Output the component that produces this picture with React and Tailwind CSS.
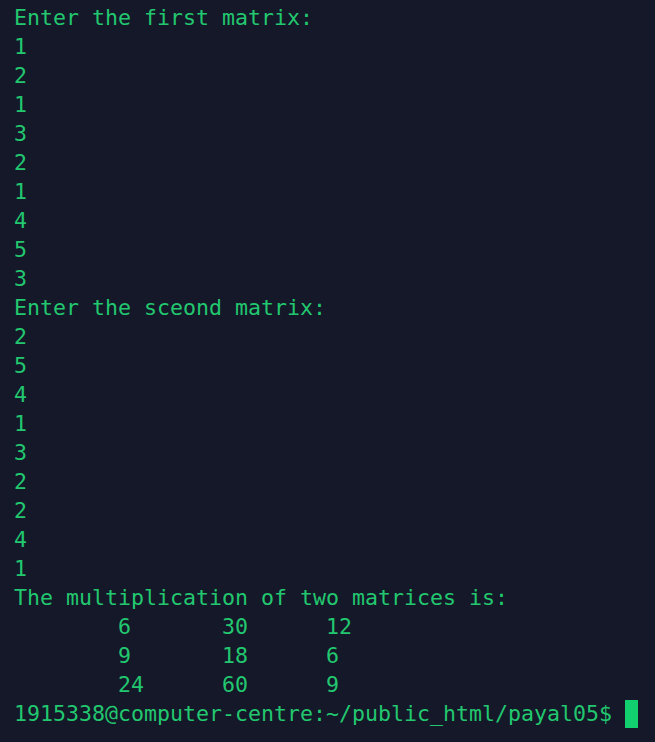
import React from 'react'

const lines = [
  'Enter the first matrix:',
  '1', '2', '1', '3', '2', '1', '4', '5', '3',
  'Enter the sceond matrix:',
  '2', '5', '4', '1', '3', '2', '2', '4', '1',
  'The multiplication of two matrices is:',
  '\t6\t30\t12',
  '\t9\t18\t6',
  '\t24\t60\t9',
]

const App = () => {
  return (
    <div className="w-[655px] h-[742px] overflow-hidden bg-[#141829] pl-[14px] pt-[3px]">
      <div
        className="text-[#22c76f] text-[21.6px] leading-[29px] whitespace-pre [tab-size:8]"
        style={{ fontFamily: '"DejaVu Sans Mono", "Liberation Mono", monospace' }}
      >
        {lines.map((l, i) => (
          <div key={i}>{l}</div>
        ))}
        <div className="flex items-center">
          <span>1915338@computer-centre:~/public_html/payal05$ </span>
          <span className="inline-block w-[13px] h-[28px] bg-[#12d070]" />
        </div>
      </div>
    </div>
  )
}

export default App
